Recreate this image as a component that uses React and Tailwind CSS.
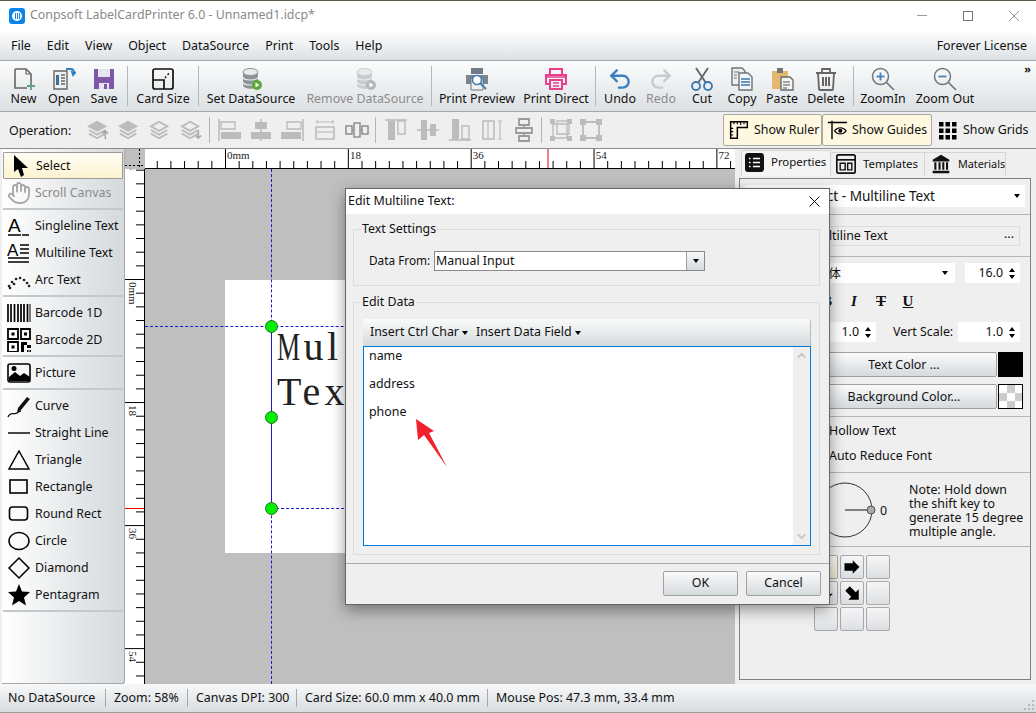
import React from "react";
import { Undo2, Redo2, Hand, ChevronUp, ChevronDown } from "lucide-react";

const MENUS = ["File", "Edit", "View", "Object", "DataSource", "Print", "Tools", "Help"];

function Svg({ size = 24, children, className = "" }) {
  return (
    <svg width={size} height={size} viewBox="0 0 24 24" fill="none" className={`shrink-0 ${className}`}>
      {children}
    </svg>
  );
}

/* toolbar icons */
const NewIcon = () => (
  <Svg>
    <path d="M3 2h11l5 5v11M3 2v19h12" stroke="#666" strokeWidth="1.6" />
    <path d="M14 2v5h5" stroke="#666" strokeWidth="1.2" />
    <path d="M19 15v8M15 19h8" stroke="#5f9f8a" strokeWidth="1.8" />
  </Svg>
);
const OpenIcon = () => (
  <Svg>
    <path d="M2 4h13v18H2z" fill="#eef0f2" stroke="#666" strokeWidth="1.4" />
    <path d="M4 8h3v10H4z" fill="#3c6e9f" />
    <path d="M9 8h4M9 11h4M9 14h4M9 17h4" stroke="#666" strokeWidth="1.3" />
    <path d="M14 2h5q3 0 3 4l-2-1 1 3 3-3" stroke="#2f7fc0" strokeWidth="1.8" />
  </Svg>
);
const SaveIcon = () => (
  <Svg>
    <path d="M2 2h20v20H2z" fill="#7e57a8" />
    <path d="M6 2h12v8H6z" fill="#e8e4ee" />
    <path d="M7 16h10v6H7z" fill="#e8e4ee" />
    <path d="M12 17h3v5h-3z" fill="#7e57a8" />
  </Svg>
);
const CardSizeIcon = () => (
  <Svg>
    <rect x="2" y="2" width="20" height="20" rx="2" stroke="#111" strokeWidth="1.7" />
    <path d="M2 13h11v9" stroke="#111" strokeWidth="1.7" />
    <path d="M14 11l5-6" stroke="#111" strokeWidth="1.4" strokeDasharray="2 2" />
  </Svg>
);
const DbIcon = ({ badge, body = "#8d9499" }) => (
  <Svg>
    <path d="M4 5v13c0 5 15 5 15 0V5z" fill={body} />
    <ellipse cx="11.5" cy="5" rx="7.5" ry="3.5" fill="#e8eaec" stroke={body} />
    <path d="M4 10c0 4 15 4 15 0M4 15c0 4 15 4 15 0" stroke="#eef0f1" strokeWidth="1.2" />
    <circle cx="18" cy="18" r="5" fill={badge} />
    <path d="M16.5 15.5v5l4-2.5z" fill="#fff" />
  </Svg>
);
const PrintPreviewIcon = () => (
  <Svg>
    <path d="M6 1h12v6H6z" fill="#6f7c88" />
    <path d="M1 8h22v9H1z" fill="#7d858c" />
    <path d="M6 11h12v12H6z" fill="#eef0f1" stroke="#6a7279" />
    <circle cx="12" cy="13" r="4.5" fill="#fff" stroke="#3d7fb5" strokeWidth="1.6" />
    <path d="M15 16l6 6" stroke="#3d7fb5" strokeWidth="2" />
  </Svg>
);
const PrintDirectIcon = () => (
  <Svg>
    <path d="M6 7V2h12v5M6 17H2V8h20v9h-4" stroke="#e83e8c" strokeWidth="2" />
    <path d="M6 13h12v9H6z" stroke="#e83e8c" strokeWidth="2" />
    <path d="M9 16h6M9 19h6M2 10h20" stroke="#e83e8c" strokeWidth="1.4" />
  </Svg>
);
const CutIcon = () => (
  <Svg>
    <path d="M6 1l10 15M18 1L8 16" stroke="#5f6569" strokeWidth="1.8" />
    <circle cx="6" cy="19" r="4" stroke="#3a76b0" strokeWidth="1.8" />
    <circle cx="18" cy="19" r="4" stroke="#3a76b0" strokeWidth="1.8" />
  </Svg>
);
const CopyIcon = () => (
  <Svg>
    <path d="M2 1h10l3 3v14H2z" fill="#eef0f1" stroke="#6d7377" strokeWidth="1.4" />
    <path d="M9 6h9l4 4v13H9z" fill="#f4f5f6" stroke="#6d7377" strokeWidth="1.4" />
    <path d="M11 12h9M11 15h9M11 18h9" stroke="#3a76b0" strokeWidth="1.3" />
    <path d="M4 5h5M4 8h3M4 11h3" stroke="#6d7377" strokeWidth="1.2" />
  </Svg>
);
const PasteIcon = () => (
  <Svg>
    <path d="M2 4h16v18H2z" fill="#e5b870" />
    <path d="M7 1h6v5H7z" fill="#70757a" />
    <path d="M11 10h9l3 3v10H11z" fill="#f4f5f6" stroke="#666" strokeWidth="1.3" />
    <path d="M13 15h7M13 18h7M13 21h4" stroke="#555" strokeWidth="1.2" />
  </Svg>
);
const DeleteIcon = () => (
  <Svg>
    <path d="M2 6h20M8 6V2h8v4" stroke="#666" strokeWidth="1.8" />
    <path d="M4 6l1 16q0 1 1 1h12q1 0 1-1l1-16" stroke="#666" strokeWidth="1.8" />
    <path d="M9 10v9M12 10v9M15 10v9" stroke="#666" strokeWidth="2" />
  </Svg>
);
const ZoomIcon = ({ plus }) => (
  <Svg>
    <circle cx="9.5" cy="9.5" r="8" stroke="#70767b" strokeWidth="1.5" />
    <path d="M15.5 15.5L23 23" stroke="#70767b" strokeWidth="1.7" />
    <path d="M5.5 9.5h8" stroke="#4a82b8" strokeWidth="1.8" />
    {plus && <path d="M9.5 5.5v8" stroke="#4a82b8" strokeWidth="1.8" />}
  </Svg>
);

const TOOLS = [
  { label: "New", w: "w-[37px]", icon: <NewIcon /> },
  { label: "Open", w: "w-[44px]", icon: <OpenIcon /> },
  { label: "Save", w: "w-[36px]", icon: <SaveIcon /> },
  { sep: "ml-[5px]" },
  { label: "Card Size", w: "w-[70px]", icon: <CardSizeIcon /> },
  { sep: "" },
  { label: "Set DataSource", w: "w-[104px]", icon: <DbIcon badge="#5aa83c" /> },
  { label: "Remove DataSource", w: "w-[124px]", off: true, icon: <DbIcon badge="#b5b8ba" body="#c9cccf" /> },
  { sep: "ml-[4px]" },
  { label: "Print Preview", w: "w-[90px]", icon: <PrintPreviewIcon /> },
  { label: "Print Direct", w: "w-[68px]", icon: <PrintDirectIcon /> },
  { sep: "ml-[5px]" },
  { label: "Undo", w: "w-[48px]", icon: <Undo2 size={26} color="#3a7fc0" strokeWidth={2.2} /> },
  { label: "Redo", w: "w-[34px]", off: true, icon: <Redo2 size={26} color="#c8cbce" strokeWidth={2.2} /> },
  { label: "Cut", w: "w-[48px]", icon: <CutIcon /> },
  { label: "Copy", w: "w-[32px]", icon: <CopyIcon /> },
  { label: "Paste", w: "w-[48px]", icon: <PasteIcon /> },
  { label: "Delete", w: "w-[40px]", icon: <DeleteIcon /> },
  { sep: "ml-[7px]" },
  { label: "ZoomIn", w: "w-[58px]", icon: <ZoomIcon plus /> },
  { label: "Zoom Out", w: "w-[66px]", icon: <ZoomIcon /> },
];

/* operation bar icons, all disabled gray */
const G = "#bcbcbc";
const Stack = ({ variant, arrow }) => (
  <Svg size={22}>
    <path d="M11 3l9 5-9 5-9-5z" fill={variant === "outline" ? "none" : G} stroke={G} strokeWidth="2" />
    <path d="M2 12l9 5 9-5M2 16l9 5 9-5" stroke={G} strokeWidth="2" />
    {arrow === "up" && <path d="M20 22v-9M17 16l3-3 3 3" stroke="#a8a8a8" strokeWidth="1.7" />}
    {arrow === "down" && <path d="M20 12v9M17 18l3 3 3-3" stroke="#a8a8a8" strokeWidth="1.7" />}
  </Svg>
);
const Bars = ({ children }) => <Svg size={24}>{children}</Svg>;
const OP_LEFT = [
  <Stack key="a" arrow="up" />,
  <Stack key="b" />,
  <Stack key="c" variant="outline" />,
  <Stack key="d" variant="outline" arrow="down" />,
];
const OP_MID = [
  <Bars key="a">
    <path d="M2 1v22" stroke={G} strokeWidth="1.6" />
    <path d="M4 4h14v7H4z" stroke={G} strokeWidth="1.4" />
    <path d="M4 14h20v7H4z" fill={G} />
  </Bars>,
  <Bars key="b">
    <path d="M12 1v22" stroke={G} strokeWidth="1.6" />
    <path d="M6 4h12v7H6z" fill={G} />
    <path d="M2 14h20v7H2z" fill={G} />
  </Bars>,
  <Bars key="c">
    <path d="M22 1v22" stroke={G} strokeWidth="1.6" />
    <path d="M6 4h14v7H6z" stroke={G} strokeWidth="1.4" />
    <path d="M0 14h20v7H0z" fill={G} />
  </Bars>,
  <Bars key="d">
    <path d="M4 4h16M4 2v4M20 2v4" stroke={G} strokeWidth="1.2" />
    <path d="M3 9h18v12H3z" stroke={G} strokeWidth="1.6" />
    <path d="M3 14h18" stroke={G} strokeWidth="1.2" />
  </Bars>,
  <Bars key="e">
    <path d="M1 8h6v8H1zM17 8h6v8h-6z" stroke="#8f8f8f" strokeWidth="1.5" />
    <path d="M9 5h6v14H9z" stroke="#8f8f8f" strokeWidth="1.5" />
    <path d="M7 12h2M15 12h2" stroke="#8f8f8f" />
  </Bars>,
];
const OP_RIGHT = [
  <Bars key="a">
    <path d="M1 2h22" stroke={G} strokeWidth="1.6" />
    <path d="M4 3h7v19H4z" fill={G} />
    <path d="M14 3h7v13h-7z" stroke={G} strokeWidth="1.4" />
  </Bars>,
  <Bars key="b">
    <path d="M1 12h22" stroke={G} strokeWidth="1.6" />
    <path d="M5 2h6v20H5z" fill={G} />
    <path d="M14 6h6v12h-6z" fill={G} />
  </Bars>,
  <Bars key="c">
    <path d="M1 22h22" stroke={G} strokeWidth="1.6" />
    <path d="M4 1h7v20H4z" fill={G} />
    <path d="M14 8h7v13h-7z" stroke={G} strokeWidth="1.4" />
  </Bars>,
  <Bars key="d">
    <path d="M3 3h11v18H3z" stroke={G} strokeWidth="1.6" />
    <path d="M8 3v18" stroke={G} strokeWidth="1.2" />
    <path d="M20 3v18M18 3h4M18 21h4" stroke={G} strokeWidth="1.2" />
  </Bars>,
  <Bars key="e">
    <path d="M7 1h10v6H7zM4 10h16v5H4zM7 18h10v5H7z" stroke="#9a9a9a" strokeWidth="1.8" />
    <path d="M12 7v3M12 15v3" stroke="#9a9a9a" strokeWidth="1.5" />
  </Bars>,
];
const OP_END = [
  <Bars key="a">
    <path d="M4 6h14v14H4z" stroke={G} strokeWidth="1.4" />
    <path d="M8 3h12v13H8z" stroke={G} strokeWidth="1.4" />
    <path d="M1 1h5v5H1zM18 1h5v5h-5zM1 18h5v5H1zM18 18h5v5h-5z" fill={G} />
  </Bars>,
  <Bars key="b">
    <path d="M4 4h16v16H4z" stroke={G} strokeWidth="1.8" />
    <path d="M1 1h6v6H1zM17 1h6v6h-6zM1 17h6v6H1zM17 17h6v6h-6z" fill={G} />
  </Bars>,
];

/* sidebar */
const SIDE_GROUPS = [
  [
    { label: "Select", active: true, icon: <Svg size={24}><path d="M6 1l14 13h-6l2 7-3 2-3-8-4 3z" fill="#000" /></Svg> },
    { label: "Scroll Canvas", off: true, icon: <Hand size={24} color="#a6a6a6" strokeWidth={1.8} /> },
  ],
  [
    {
      label: "Singleline Text",
      icon: (
        <svg width="24" height="24" viewBox="0 0 24 24" className="shrink-0">
          <text x="1" y="18" fontSize="19" fontFamily="Liberation Sans, sans-serif" fill="#000">A</text>
          <path d="M1 21h13M15 21h7" stroke="#000" strokeWidth="1.5" />
        </svg>
      ),
    },
    {
      label: "Multiline Text",
      icon: (
        <svg width="24" height="24" viewBox="0 0 24 24" className="shrink-0">
          <text x="0" y="15" fontSize="17" fontFamily="Liberation Sans, sans-serif" fill="#000">A</text>
          <path d="M13 4h9M13 8h9M13 12h9M1 17h21M1 21h21" stroke="#000" strokeWidth="1.3" />
        </svg>
      ),
    },
    {
      label: "Arc Text",
      icon: (
        <Svg>
          <path d="M2 18l.1 0M5 14l.1 0M9 11l.1 0M13 10l.1 0M17 12l.1 0M20 15l.1 0M22 18l.1 0M3 20l.1 0M7 16l.1 0" stroke="#222" strokeWidth="2.6" strokeLinecap="round" />
        </Svg>
      ),
    },
  ],
  [
    {
      label: "Barcode 1D",
      icon: (
        <Svg>
          <path d="M1 3v18M4 3v18M7.5 3v18M11 3v18M14 3v18M17 3v18M20.500 3v18" stroke="#000" strokeWidth="1.7" />
          <path d="M23 3v18" stroke="#000" strokeWidth="1" />
        </Svg>
      ),
    },
    {
      label: "Barcode 2D",
      icon: (
        <Svg>
          <path d="M1 1h10v10H1zM14 1h9v10h-9zM1 14h10v10H1z" stroke="#000" strokeWidth="1.8" />
          <path d="M4.500 4.500h3v3h-3zM17 4.500h3v3h-3zM4.500 17.500h3v3h-3z" fill="#000" />
          <path d="M14 14h6v3h-3v7h-3zM20 17h4v3h-4zM20 22h1.500v2H20zM22.500 22H24v2h-1.500z" fill="#000" />
        </Svg>
      ),
    },
  ],
  [
    {
      label: "Picture",
      icon: (
        <Svg>
          <rect x="1" y="3" width="22" height="18" rx="2" stroke="#000" strokeWidth="1.6" />
          <path d="M2 20v-4l6-5 5 4 4-3 6 4v4z" fill="#000" />
          <circle cx="7" cy="7.500" r="2.500" fill="#000" />
        </Svg>
      ),
    },
  ],
  [
    {
      label: "Curve",
      icon: (
        <Svg>
          <path d="M11 14l9-11 3 2-9 11-4 2z" fill="#111" />
          <path d="M1 23c2-6 7-2 9-4s3-2 4-2" stroke="#111" strokeWidth="1.3" />
        </Svg>
      ),
    },
    { label: "Straight Line", icon: <Svg><path d="M1 12h22" stroke="#333" strokeWidth="1.8" /></Svg> },
    { label: "Triangle", icon: <Svg><path d="M12 3l10 18H2z" stroke="#000" strokeWidth="1.5" /></Svg> },
    { label: "Rectangle", icon: <Svg><rect x="3" y="5" width="17" height="13" stroke="#000" strokeWidth="1.6" /></Svg> },
    { label: "Round Rect", icon: <Svg><rect x="2.500" y="5" width="18" height="13" rx="3" stroke="#000" strokeWidth="1.6" /></Svg> },
    { label: "Circle", icon: <Svg><ellipse cx="12" cy="12" rx="10" ry="8.500" stroke="#000" strokeWidth="1.5" /></Svg> },
    { label: "Diamond", icon: <Svg><path d="M12 2l10 10-10 10L2 12z" stroke="#000" strokeWidth="1.5" /></Svg> },
    { label: "Pentagram", icon: <Svg><path d="M12 1l3 7.500 8 .5-6 5.500 2 8-7-4.500L5 22.500l2-8L1 9l8-.5z" fill="#000" /></Svg> },
  ],
];

function Sidebar() {
  return (
    <aside className="w-[123px] ml-[2px] shrink-0 flex flex-col bg-gradient-to-r from-white to-[#d4d9dc] border-r border-b border-[#a9a9a9] rounded-br-[3px] pt-[3px]">
      {SIDE_GROUPS.map((group, i) => (
        <div key={i} className="border-b-2 border-[#c4c8cb] mx-[1px] pb-[2px] mb-[2px]">
          {group.map((item) => (
            <div
              key={item.label}
              className={`h-[27px] flex items-center gap-[4px] pl-[4px] pt-[1px] whitespace-nowrap ${
                item.active
                  ? "bg-gradient-to-b from-[#fffdf4] to-[#fdf3d0] border border-[#9b9b9b] rounded-[1px]"
                  : ""
              } ${item.off ? "text-[#8a8a8a]" : ""}`}
            >
              {item.icon}
              <span>{item.label}</span>
            </div>
          ))}
        </div>
      ))}
    </aside>
  );
}

/* rulers */
function HRuler() {
  const ticks = Array.from({ length: 44 }, (_, i) => 80.5 - 13.65 * 5 + 13.65 * i);
  const labels = ["0mm", "18", "36", "54", "72"];
  return (
    <svg width="590" height="20" className="block bg-white">
      {ticks.map((x, i) => {
        const major = (i - 5) % 9 === 0;
        return <line key={i} x1={x} x2={x} y1={major ? 0 : 12} y2="19" stroke="#000" />;
      })}
      {labels.map((t, i) => (
        <text key={t} x={82 + 122.9 * i} y="10" fontSize="11" fontFamily="Liberation Serif, serif" fill="#222">{t}</text>
      ))}
      <line x1="403" x2="403" y1="0" y2="19" stroke="#e00" />
      <line x1="0" x2="590" y1="19.500" y2="19.500" stroke="#000" />
    </svg>
  );
}

function VRuler() {
  const ticks = Array.from({ length: 40 }, (_, i) => -12.5 + 13.67 * i);
  const labels = [["18", -12], ["0mm", 111], ["18", 234], ["36", 357], ["54", 480]];
  return (
    <svg width="20" height="515" className="block bg-white shrink-0">
      {ticks.map((y, i) => {
        const major = i % 9 === 0;
        return <line key={i} x1={major ? 0 : 11} x2="19" y1={y} y2={y} stroke="#000" />;
      })}
      {labels.map(([t, y]) => (
        <text key={y} x="0" y="0" transform={`translate(4 ${y + 2}) rotate(90)`} fontSize="11" fontFamily="Liberation Serif, serif" fill="#222">{t}</text>
      ))}
      <line x1="0" x2="19" y1="339.500" y2="339.500" stroke="#e00" />
      <line x1="19.500" x2="19.500" y1="0" y2="515" stroke="#000" />
    </svg>
  );
}

const Handle = ({ className }) => (
  <div className={`absolute left-[120px] w-[13px] h-[13px] rounded-full bg-[#00f000] border border-[#2c6e2c] ${className}`} />
);

const letterClass = (ch) => {
  if (ch === "M") return "w-[25px] text-left origin-left scale-x-[0.65]";
  if (ch === "l") return "w-[15px] text-center";
  return "w-[23px] text-center";
};

const CanvasLine = ({ text }) => (
  <div className="h-[45px] whitespace-nowrap">
    {text.split("").map((ch, i) => (
      <span key={i} className={`inline-block ${letterClass(ch)}`}>{ch}</span>
    ))}
  </div>
);

function Canvas() {
  return (
    <div className="relative flex-1 bg-[#bfbfbf] overflow-hidden">
      {/* card and guides sit on a free canvas */}
      <div className="absolute left-[80px] top-[111px] w-[410px] h-[273px] bg-white" />
      <div className="absolute left-[126px] top-0 bottom-0 border-l border-dashed border-[#1a1ad0]" />
      <div className="absolute left-[126px] top-[157px] h-[182px] border-l border-[#1a1ad0]" />
      <div className="absolute left-0 right-0 top-[157px] border-t border-dashed border-[#1a1ad0]" />
      <div className="absolute left-[126px] right-0 top-[339px] border-t border-dashed border-[#1a1ad0]" />
      <div className="absolute left-[132px] top-[155px] font-['Liberation_Serif',serif] text-[40px] leading-[45px] text-[#222]">
        <CanvasLine text="Mult" />
        <CanvasLine text="Text" />
      </div>
      <Handle className="top-[151px]" />
      <Handle className="top-[242px]" />
      <Handle className="top-[333px]" />
    </div>
  );
}

/* right panel */
const Spin = ({ value, className }) => (
  <div className={`h-[20px] bg-white flex items-center justify-end gap-[6px] pr-[5px] ${className}`}>
    <span>{value}</span>
    <span className="flex flex-col gap-[3px]">
      <span className="w-0 h-0 border-x-[3px] border-x-transparent border-b-[4px] border-b-black" />
      <span className="w-0 h-0 border-x-[3px] border-x-transparent border-t-[4px] border-t-black" />
    </span>
  </div>
);
const Caret = () => <span className="w-0 h-0 border-x-[3.5px] border-x-transparent border-t-[4px] border-t-black" />;

const BTN = "border border-[#a0a0a0] rounded-[2px] bg-gradient-to-b from-[#fbfbfc] to-[#d5dadd]";

function RightPanel() {
  return (
    <section className="flex-1 flex flex-col bg-[#efefef] min-w-0">
      <div className="h-[27px] pl-[6px] flex items-end shrink-0 text-[11.400px]">
        <div className="w-[90px] h-[26px] bg-[#f4f4f4] flex items-center gap-[7px] pl-[3px] pb-[3px] border-t border-x border-[#d5d5d5]">
          <Svg size={19}>
            <rect width="24" height="24" rx="4" fill="#111" />
            <path d="M10 7h9M10 12h9M10 17h9M5 7h2M5 12h2M5 17h2" stroke="#fff" strokeWidth="2" />
          </Svg>
          <span>Properties</span>
        </div>
        <div className="w-[94px] h-[24px] flex items-center gap-[7px] pl-[5px] pb-[1px] border-t border-r border-[#d5d5d5]">
          <Svg size={20}>
            <rect x="1" y="1" width="22" height="22" rx="2" stroke="#111" strokeWidth="2" />
            <path d="M1 7h22" stroke="#111" strokeWidth="2" />
            <path d="M5 11h6v8H5zM14 11h5v8h-5z" stroke="#111" strokeWidth="1.7" />
          </Svg>
          <span>Templates</span>
        </div>
        <div className="w-[81px] h-[24px] flex items-center gap-[7px] pl-[6px] pb-[1px] border-t border-r border-[#d5d5d5]">
          <Svg size={20}>
            <path d="M12 1L2 7v2h20V7z" fill="#111" />
            <path d="M4 10h2.500v9H4zM9 10h2.500v9H9zM13.500 10H16v9h-2.500zM18 10h2.500v9H18zM2 20h20v3H2z" fill="#111" />
          </Svg>
          <span className="text-[10.800px]">Materials</span>
        </div>
      </div>
      <div className="ml-[4px] mr-[5px] h-[502px] border border-[#808080] mt-[2px] flex flex-col">
        <div className="h-[36px] shrink-0 border-b border-[#b5b5b5] pt-[6px] px-[5px]">
          <div className="h-[22px] bg-white flex items-center pl-[5px] pr-[5px] text-[13.6px]">
            <span className="ml-auto mr-[79px] whitespace-nowrap">Text Object - Multiline Text</span>
            <Caret />
          </div>
        </div>
        <div className="h-[42px] shrink-0 border-b border-[#b5b5b5] pt-[11px] pl-[5px] pr-[10px]">
          <div className="h-[20px] border border-[#dcdcdc] flex items-center justify-between pl-[64px] pr-[5px]">
            <span>Multiline Text</span>
            <span className="leading-none pb-[4px]">...</span>
          </div>
        </div>
        <div className="h-[160px] shrink-0 border-b border-[#b5b5b5] pt-[6px] pl-[5px] pr-[10px]">
          <div className="flex justify-between">
            <div className="w-[210px] h-[20px] bg-white flex items-center justify-between pl-[71px] pr-[7px] font-['Noto_Sans_CJK_SC',sans-serif]">
              <span>宋体</span>
              <Caret />
            </div>
            <Spin value="16.0" className="w-[55px]" />
          </div>
          <div className="h-[20px] mt-[8px] flex items-center pl-[76px] gap-[15px] text-[15px] font-['Liberation_Serif',serif]">
            <span className="w-[12px] font-bold text-center">B</span>
            <span className="w-[12px] font-bold italic text-center">I</span>
            <span className="w-[12px] font-bold text-center line-through">T</span>
            <span className="w-[12px] font-bold text-center underline">U</span>
          </div>
          <div className="flex justify-between items-center mt-[11px]">
            <div className="flex items-center gap-[17px]">
              <Spin value="1.0" className="w-[60px] ml-[71px]" />
              <span>Vert Scale:</span>
            </div>
            <Spin value="1.0" className="w-[62px]" />
          </div>
          <div className="mt-[10px] flex pl-[66px] gap-[1px] -mr-[4px]">
            <div className={`w-[186px] h-[25px] flex items-center justify-center pt-[2px] ${BTN}`}>Text Color ...</div>
            <div className="w-[25px] h-[25px] bg-black" />
          </div>
          <div className="mt-[7px] flex pl-[66px] gap-[1px] -mr-[4px]">
            <div className={`w-[186px] h-[25px] flex items-center justify-center pt-[2px] ${BTN}`}>Background Color...</div>
            <div className="w-[25px] h-[25px] border border-black bg-[conic-gradient(#ccc_25%,#fff_0_50%,#ccc_0_75%,#fff_0)] bg-[length:16px_16px]" />
          </div>
        </div>
        <div className="h-[56px] shrink-0 border-b border-[#b5b5b5] pl-[89px] pt-[2px]">
          <div className="h-[25px] flex items-center">Hollow Text</div>
          <div className="h-[25px] flex items-center">Auto Reduce Font</div>
        </div>
        <div className="h-[74px] shrink-0 border-b border-[#b5b5b5] flex items-center pl-[75px]">
          <svg width="72" height="62" viewBox="0 0 72 62" className="shrink-0">
            <circle cx="30" cy="31" r="27" stroke="#333" fill="none" />
            <line x1="30" y1="31" x2="56" y2="31" stroke="#111" />
            <circle cx="56" cy="31" r="4" fill="#aaa" stroke="#555" />
            <text x="65" y="36" fontSize="12.400" fontFamily="Noto Sans, sans-serif" fill="#111">0</text>
          </svg>
          <p className="ml-[22px] mt-[2px] w-[124px] leading-[14px] whitespace-pre-line">{"Note: Hold down\nthe shift key to\ngenerate 15 degree\nmultiple angle."}</p>
        </div>
        <div className="grid grid-cols-[24px_24px_24px] gap-[2px] pl-[74px] pt-[8px]">
          {[
            { hi: true },
            { arrow: <path d="M2 7h11V3l9 9-9 9v-4H2z" fill="#000" /> },
            {},
            { arrow: <path d="M7 2h10v11h4l-9 9-9-9h4z" fill="#000" /> },
            { arrow: <path d="M3 9l6-6 8 8 4-4v14H7l4-4z" fill="#000" /> },
            {},
            {},
            {},
            {},
          ].map((cell, i) => (
            <div
              key={i}
              className={`h-[24px] flex items-center justify-center border border-[#a8a8a8] rounded-[2px] ${
                cell.hi ? "bg-gradient-to-b from-[#fffdf4] to-[#ebe6d2]" : "bg-gradient-to-b from-[#f4f5f6] to-[#dde0e3]"
              }`}
            >
              {cell.arrow && <svg width="18" height="18" viewBox="0 0 24 24">{cell.arrow}</svg>}
            </div>
          ))}
        </div>
      </div>
    </section>
  );
}

/* dialog */
function Group({ title, className, children }) {
  return (
    <div className={`relative ml-[7px] mr-[9px] border border-[#dcdcdc] ${className}`}>
      <span className="absolute left-[7px] -top-[10px] bg-[#efefef] px-[1px] leading-[18px]">{title}</span>
      {children}
    </div>
  );
}

function Dialog() {
  return (
    <div className="absolute left-[345px] top-[187px] w-[485px] h-[417px] flex flex-col bg-[#efefef] border border-[#666] shadow-[0_5px_14px_rgba(0,0,0,0.4)]">
      <div className="h-[25px] shrink-0 bg-white flex items-center justify-between pl-[2px] pr-[9px]">
        <span>Edit Multiline Text:</span>
        <svg width="11" height="11" viewBox="0 0 11 11"><path d="M0.500 0.500l10 10M10.500 0.500l-10 10" stroke="#111" /></svg>
      </div>
      <Group title="Text Settings" className="mt-[15px] h-[57px] shrink-0">
        <div className="flex items-center pl-[15px] pt-[21px]">
          <span className="w-[65px] whitespace-nowrap text-[11.800px]">Data From:</span>
          <div className="w-[271px] h-[20px] border border-[#8a8a8a] bg-white flex items-center justify-between pl-[1px]">
            <span>Manual Input</span>
            <div className="w-[18px] h-full flex items-center justify-center border-l border-[#a0a0a0] bg-gradient-to-b from-[#f8f9fa] to-[#d5dadd]">
              <Caret />
            </div>
          </div>
        </div>
      </Group>
      <Group title="Edit Data" className="mt-[16px] h-[253px] shrink-0">
        <div className="ml-[9px] mr-[8px] mt-[16px] h-[27px] flex items-center gap-[8px] pl-[7px] rounded-t-[2px] border-r border-[#bbb] bg-gradient-to-b from-[#fafbfb] to-[#d5dadd]">
          <span className="flex items-center gap-[3px]">Insert Ctrl Char <Caret /></span>
          <span className="flex items-center gap-[3px]">Insert Data Field <Caret /></span>
        </div>
        <div className="ml-[9px] mr-[8px] h-[200px] border border-[#0078d7] bg-white flex justify-between">
          <div className="pl-[5px] flex flex-col gap-[10px] leading-[18px]">
            <div>name</div>
            <div>address</div>
            <div>phone</div>
          </div>
          <div className="w-[17px] bg-[#efefef] flex flex-col justify-between items-center py-[2px]">
            <ChevronUp size={13} color="#c4c4c4" strokeWidth={3} />
            <ChevronDown size={13} color="#c4c4c4" strokeWidth={3} />
          </div>
        </div>
      </Group>
      <div className="mt-[8px] border-t border-[#a8a8a8] flex justify-end gap-[8px] pt-[7px] pr-[8px]">
        <div className={`w-[75px] h-[25px] flex items-center justify-center ${BTN}`}>OK</div>
        <div className={`w-[75px] h-[25px] flex items-center justify-center ${BTN}`}>Cancel</div>
      </div>
    </div>
  );
}

const StatusCell = ({ children, className = "" }) => (
  <div className={`h-[18px] shrink-0 flex items-center whitespace-nowrap border-r border-[#a8a8a8] ${className}`}>{children}</div>
);

export default function App() {
  return (
    <div className="relative w-[1036px] h-[713px] overflow-hidden flex flex-col bg-[#efefef] text-[12.4px] leading-none text-[#111] font-['Noto_Sans',sans-serif] border-t border-[#55604c]">
      {/* title bar */}
      <header className="h-[29px] shrink-0 bg-white flex items-center pl-[9px]">
        <div className="w-[16px] h-[16px] rounded-[3px] bg-[#0a84e8] flex items-center justify-center">
          <div className="w-[10px] h-[10px] rounded-full bg-white flex items-center justify-center gap-[1px]">
            <span className="w-[1px] h-[6px] bg-[#0a84e8]" />
            <span className="w-[1px] h-[6px] bg-[#0a84e8]" />
            <span className="w-[1px] h-[6px] bg-[#0a84e8]" />
          </div>
        </div>
        <span className="ml-[5px] text-[#8a8a8a]">Conpsoft LabelCardPrinter 6.0 - Unnamed1.idcp*</span>
        <div className="ml-auto flex items-center gap-[36px] pr-[17px]">
          <div className="w-[10px] h-[1px] bg-[#9a9a9a]" />
          <div className="w-[10px] h-[10px] border border-[#777]" />
          <svg width="10" height="10" viewBox="0 0 10 10"><path d="M0 0l10 10M10 0L0 10" stroke="#999" /></svg>
        </div>
      </header>

      {/* menu bar */}
      <nav className="h-[31px] shrink-0 flex items-center justify-between pl-[11px] pr-[9px] pt-[2px] bg-gradient-to-b from-white to-[#dde1e4] border-b border-[#a6a6a6]">
        <div className="flex gap-[16px]">
          {MENUS.map((m) => (
            <span key={m}>{m}</span>
          ))}
        </div>
        <span>Forever License</span>
      </nav>

      {/* main toolbar */}
      <div className="relative h-[51px] shrink-0 flex items-stretch pl-[5px] bg-gradient-to-b from-[#fbfcfc] to-[#dde1e4] border-b border-[#a6a6a6]">
        {TOOLS.map((t, i) =>
          t.sep !== undefined ? (
            <div key={i} className={`w-[1px] my-[5px] bg-[#b5b8ba] ${t.sep}`} />
          ) : (
            <div key={t.label} className={`${t.w} shrink-0 flex flex-col items-center pt-[5px] whitespace-nowrap ${t.off ? "text-[#8c8c8c]" : ""}`}>
              <div className="h-[26px] flex items-center justify-center">{t.icon}</div>
              <span className="mt-[1px]">{t.label}</span>
            </div>
          )
        )}
        <span className="absolute right-[5px] top-[2px] text-[11px] font-bold">»</span>
      </div>

      {/* operation bar */}
      <div className="h-[37px] shrink-0 flex items-center pl-[9px] border-b border-[#8c8c8c]">
        <span className="w-[67px] pt-[3px]">Operation:</span>
        <div className="flex gap-[9px] w-[133px] pl-[11px]">{OP_LEFT}</div>
        <div className="w-[1px] h-[26px] bg-[#b5b5b5]" />
        <div className="flex gap-[8px] pl-[7px] w-[165px]">{OP_MID}</div>
        <div className="w-[1px] h-[26px] bg-[#b5b5b5]" />
        <div className="flex gap-[8px] pl-[8px] w-[165px]">{OP_RIGHT}</div>
        <div className="w-[1px] h-[26px] bg-[#b5b5b5]" />
        <div className="flex gap-[6px] pl-[7px] w-[181px]">{OP_END}</div>
        <div className="w-[99px] h-[32px] shrink-0 flex items-center gap-[5px] pl-[5px] whitespace-nowrap border border-[#a8a8a8] rounded-[2px] bg-[#fff8e1]">
          <Svg size={20}>
            <path d="M2 2h20v7H10v13H2z" stroke="#000" strokeWidth="1.8" />
            <path d="M6 2v3M10 2v3M14 2v4M18 2v3M2 10h3M2 14h3M2 18h3" stroke="#000" strokeWidth="1.4" />
          </Svg>
          <span>Show Ruler</span>
        </div>
        <div className="w-[110px] h-[32px] shrink-0 flex items-center gap-[5px] pl-[4px] whitespace-nowrap border border-[#a8a8a8] rounded-[2px] bg-[#fff8e1]">
          <Svg size={20}>
            <path d="M1 3h23M6 1v22" stroke="#000" strokeWidth="1.7" />
            <path d="M9 13c4-5 10-5 14 0-4 5-10 5-14 0z" stroke="#000" strokeWidth="1.3" />
            <circle cx="16" cy="13" r="2.500" fill="#000" />
          </Svg>
          <span>Show Guides</span>
        </div>
        <div className="flex items-center gap-[6px] pl-[6px] whitespace-nowrap">
          <svg width="19" height="19" viewBox="0 0 19 19" fill="#000" className="shrink-0">
            {[1, 7.5, 14].flatMap((y) =>
              [1, 7.5, 14].map((x) => <rect key={`${x}-${y}`} x={x} y={y} width="4.500" height="4.500" />)
            )}
          </svg>
          <span>Show Grids</span>
        </div>
      </div>

      {/* workspace */}
      <main className="flex-1 flex min-h-0">
        <Sidebar />
        <div className="w-[610px] shrink-0 flex flex-col">
          <div className="h-[20px] flex shrink-0">
            <svg width="20" height="20" className="block bg-[#bfbfbf] shrink-0">
              <path d="M14.500 0v20M0 16.500h20" stroke="#000" strokeDasharray="2 2" />
            </svg>
            <HRuler />
          </div>
          <div className="flex-1 flex min-h-0">
            <VRuler />
            <Canvas />
          </div>
        </div>
        <RightPanel />
      </main>

      {/* status bar */}
      <footer className="relative h-[29px] shrink-0 flex items-center gap-[8px] pl-[8px] bg-gradient-to-b from-[#f7f8f9] to-[#d9dde0] border-b border-[#9a9a9a]">
        <StatusCell className="w-[98px]">No DataSource</StatusCell>
        <StatusCell className="w-[74px]">Zoom: 58%</StatusCell>
        <StatusCell className="w-[101px]">Canvas DPI: 300</StatusCell>
        <StatusCell className="w-[183px]">Card Size: 60.0 mm x 40.0 mm</StatusCell>
        <span className="whitespace-nowrap">Mouse Pos: 47.3 mm, 33.4 mm</span>
        <svg width="12" height="12" viewBox="0 0 12 12" fill="#b5b9bc" className="absolute right-[1px] bottom-[1px]">
          <path d="M9 1h2v2H9zM5 5h2v2H5zM9 5h2v2H9zM1 9h2v2H1zM5 9h2v2H5zM9 9h2v2H9z" />
        </svg>
      </footer>

      <Dialog />

      {/* red callout arrow over the dialog */}
      <svg width="60" height="65" viewBox="0 0 60 65" className="absolute left-[400px] top-[409px]">
        <polygon points="16,9 34,21 29,23 47,57 24,25 18,30" fill="#f0202c" />
      </svg>
    </div>
  );
}
